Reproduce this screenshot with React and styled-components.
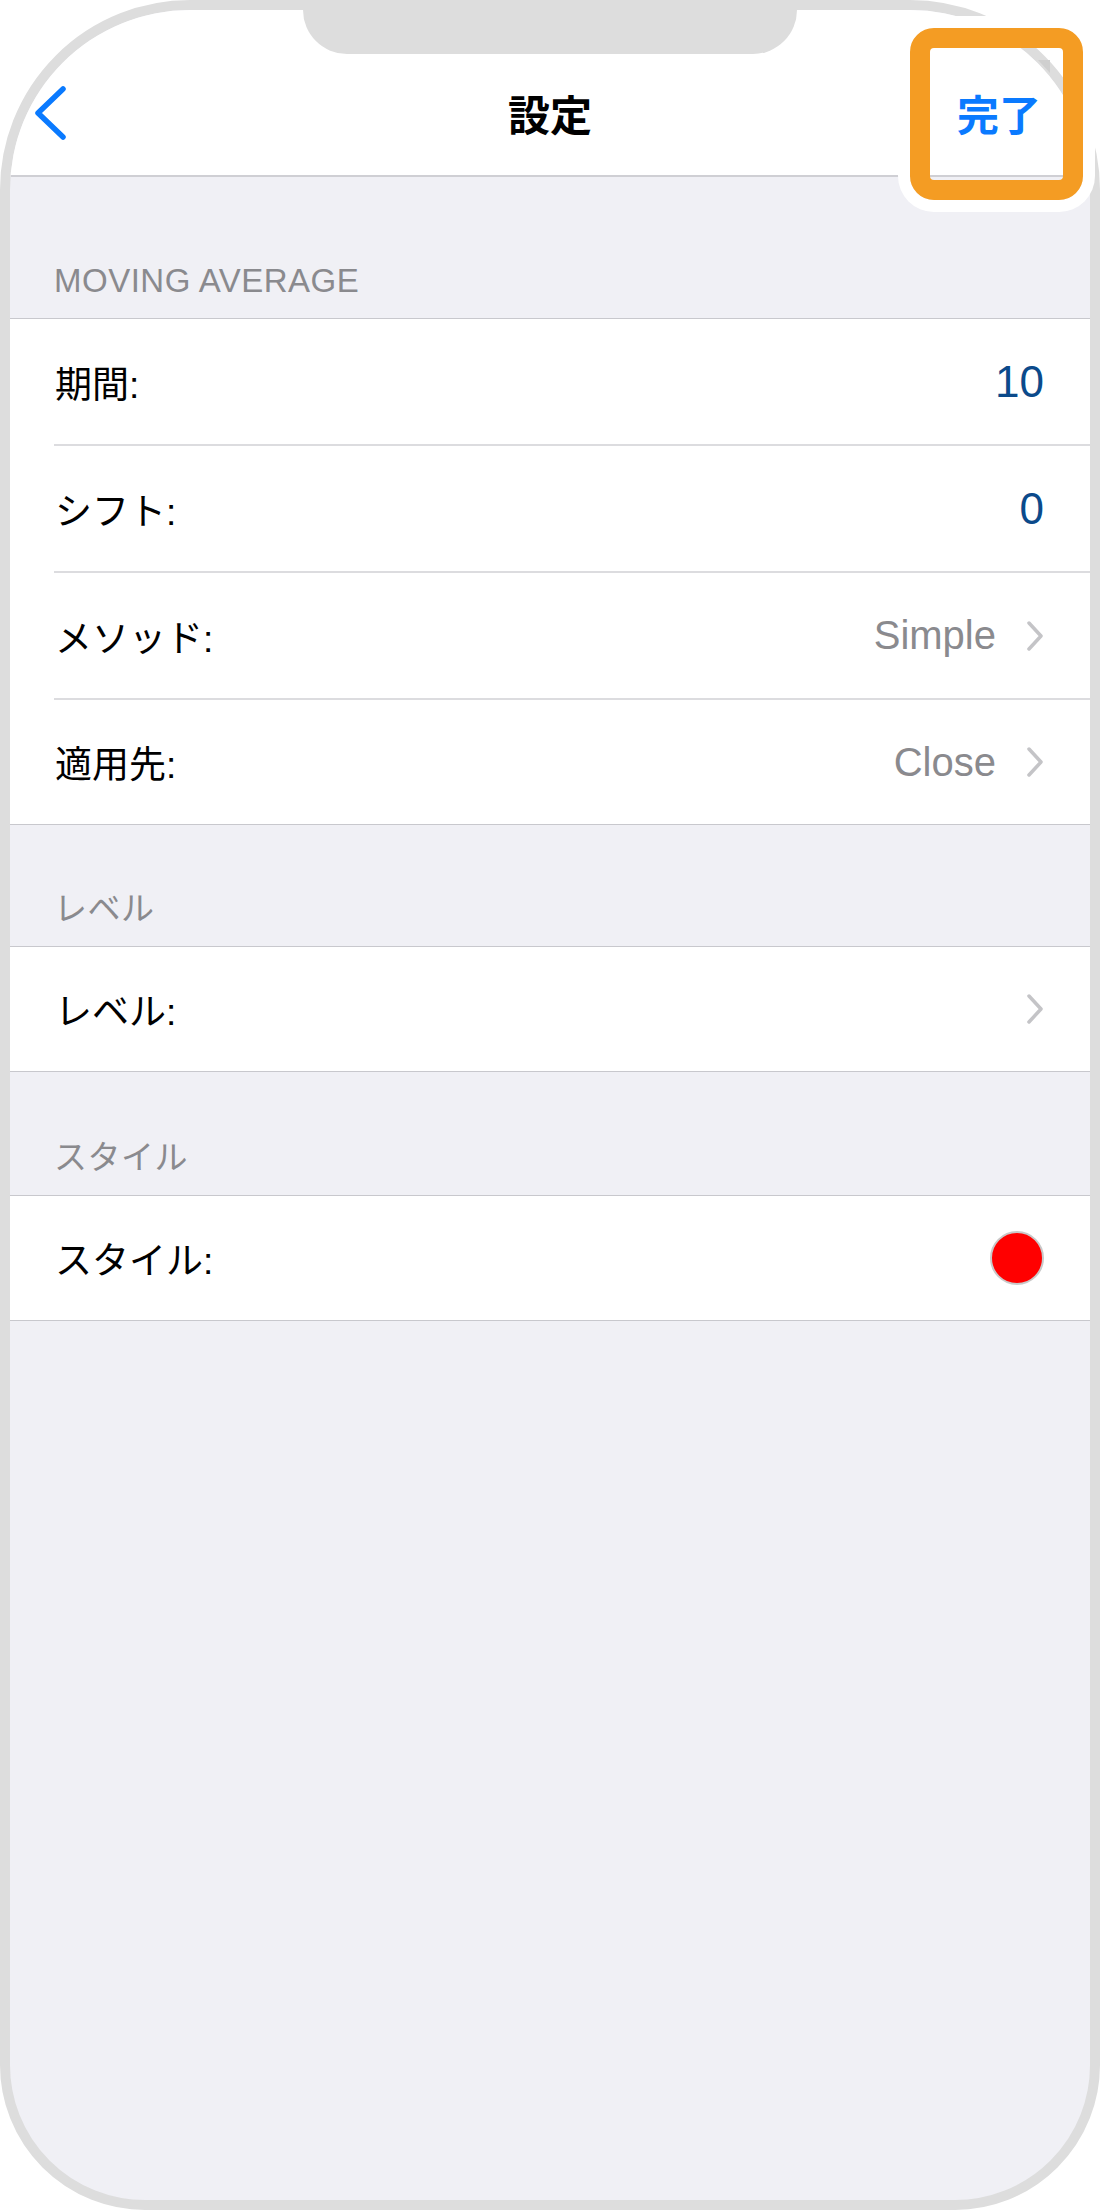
import React from "react";
import styled, { createGlobalStyle } from "styled-components";

const GlobalStyle = createGlobalStyle`
  html, body {
    margin: 0;
    padding: 0;
    background: #ffffff;
  }
  * { box-sizing: border-box; }
  body {
    font-family: "Liberation Sans", "Noto Sans CJK JP", sans-serif;
  }
`;

const Stage = styled.div`
  position: relative;
  width: 1100px;
  height: 2210px;
`;

const Phone = styled.div`
  position: relative;
  width: 1100px;
  height: 2210px;
  border: 10px solid #dddddd;
  border-radius: 190px 190px 145px 145px;
  overflow: hidden;
  background: #f0f0f5;
  display: flex;
  flex-direction: column;
`;

const Notch = styled.div`
  position: absolute;
  top: 0;
  left: 293px;
  width: 494px;
  height: 44px;
  background: #dddddd;
  border-radius: 0 0 44px 44px;
`;

const NavBar = styled.header`
  height: 167px;
  padding-top: 40px;
  background: #ffffff;
  border-bottom: 2px solid #cfcfd4;
  display: grid;
  grid-template-columns: 1fr auto 1fr;
  align-items: center;
`;

const BackButton = styled.div`
  padding-left: 23px;
  display: flex;
  align-items: center;
`;

const Title = styled.h1`
  margin: 0;
  font-family: "Noto Sans CJK JP", sans-serif;
  font-weight: 700;
  font-size: 42px;
  color: #000000;
  line-height: 1;
`;

const DoneButton = styled.div`
  justify-self: end;
  padding-right: 49px;
  font-family: "Noto Sans CJK JP", sans-serif;
  font-weight: 700;
  font-size: 42px;
  line-height: 1;
  color: #0a7aff;
`;

const SectionHeader = styled.div`
  height: ${(p) => p.$h}px;
  display: flex;
  align-items: flex-end;
  padding: 0 44px 17px;
  font-size: 33px;
  line-height: 40px;
  letter-spacing: 0.5px;
  color: #8a8a8e;
`;

const Group = styled.section`
  background: #ffffff;
  border-top: 1px solid #c8c8cd;
  border-bottom: 1px solid #c8c8cd;
`;

const Row = styled.div`
  padding-left: 44px;
  &:last-child > div {
    border-bottom: none;
    height: 124px;
  }
`;

const RowInner = styled.div`
  height: 127px;
  border-bottom: 2px solid #dcdcdf;
  padding-right: 46px;
  display: flex;
  align-items: center;
  justify-content: space-between;
`;

const Label = styled.span`
  font-size: 37px;
  color: #000000;
  padding-left: 1px;
`;

const Trailing = styled.div`
  display: flex;
  align-items: center;
  gap: 30px;
`;

const Value = styled.span`
  font-size: ${(p) => (p.$number ? 44 : 40)}px;
  color: ${(p) => (p.$number ? "#0b4a8b" : "#8a8a8e")};
`;

const ColorDot = styled.span`
  width: 54px;
  height: 54px;
  border-radius: 50%;
  background: ${(p) => p.$color};
  border: 2px solid #c9c9c9;
`;

const Highlight = styled.div`
  position: absolute;
  left: 910px;
  top: 28px;
  width: 173px;
  height: 172px;
  border: 20px solid #f49c23;
  border-radius: 24px;
  box-shadow: 0 0 0 12px #ffffff;
`;

const CornerMark = styled.span`
  position: absolute;
  top: 12px;
  left: 108px;
  width: 12px;
  height: 13px;
  background: #cfcfcf;
  clip-path: polygon(0 0, 100% 0, 100% 100%);
`;

const BackChevron = () => (
  <svg width="34" height="56" viewBox="0 0 34 56" fill="none">
    <polyline
      points="30,4 5,28 30,52"
      stroke="#0a7aff"
      strokeWidth="5.5"
      strokeLinecap="round"
      strokeLinejoin="round"
    />
  </svg>
);

const Disclosure = () => (
  <svg width="18" height="30" viewBox="0 0 18 30" fill="none">
    <polyline
      points="3,2 15,15 3,28"
      stroke="#c4c4c7"
      strokeWidth="3.5"
      strokeLinecap="round"
      strokeLinejoin="round"
    />
  </svg>
);

const SettingRow = ({ label, value, number, chevron, dot }) => (
  <Row>
    <RowInner>
      <Label>{label}</Label>
      <Trailing>
        {value != null && <Value $number={number}>{value}</Value>}
        {dot && <ColorDot $color={dot} />}
        {chevron && <Disclosure />}
      </Trailing>
    </RowInner>
  </Row>
);

export default function App() {
  return (
    <>
      <GlobalStyle />
      <Stage>
        <Phone>
          <Notch />
          <NavBar>
            <BackButton>
              <BackChevron />
            </BackButton>
            <Title>設定</Title>
            <DoneButton>完了</DoneButton>
          </NavBar>

          <SectionHeader $h={141}>MOVING AVERAGE</SectionHeader>
          <Group>
            <SettingRow label="期間:" value="10" number />
            <SettingRow label="シフト:" value="0" number />
            <SettingRow label="メソッド:" value="Simple" chevron />
            <SettingRow label="適用先:" value="Close" chevron />
          </Group>

          <SectionHeader $h={121}>レベル</SectionHeader>
          <Group>
            <SettingRow label="レベル:" chevron />
          </Group>

          <SectionHeader $h={123}>スタイル</SectionHeader>
          <Group>
            <SettingRow label="スタイル:" dot="#ff0000" />
          </Group>
        </Phone>
        <Highlight>
          <CornerMark />
        </Highlight>
      </Stage>
    </>
  );
}
